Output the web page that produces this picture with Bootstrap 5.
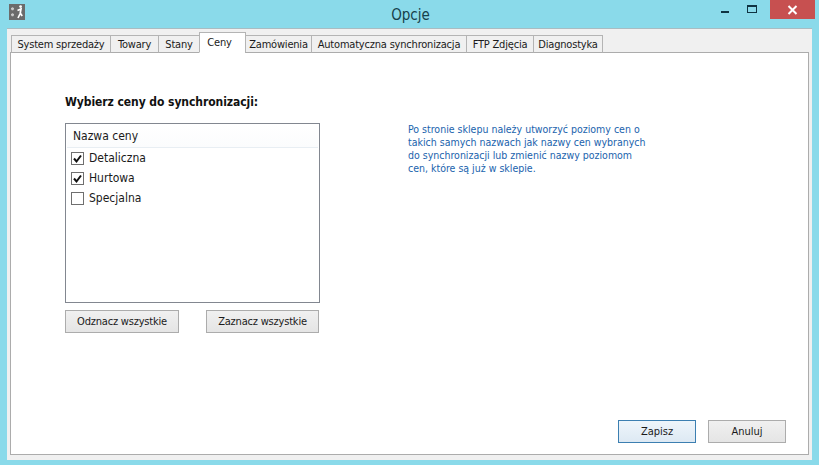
<!DOCTYPE html>
<html lang="pl"><head><meta charset="utf-8"><title>Opcje</title>
<link rel="stylesheet" href="https://cdn.jsdelivr.net/npm/bootstrap@5.3.0/dist/css/bootstrap.min.css">
<style>
html,body{height:100%}
body{width:819px;height:465px;overflow:hidden;background:#8adaea;font-family:"DejaVu Sans Condensed","DejaVu Sans","Liberation Sans",sans-serif;font-size:11px;color:#1a1a1a}
.win-title{height:28px;padding-left:9px}
.win-ico{width:16px;height:16px;margin-top:-4px}
.win-name{font-family:"DejaVu Sans Condensed","DejaVu Sans",sans-serif;font-size:15px;color:#17414b;left:0;right:0;top:5px;text-align:center;padding-left:2px;line-height:20px}
.win-btns{right:4px;top:0}
.win-b{width:26px;height:19px}
.win-x{width:45px;height:19px;background:#c75050}
.win-body{margin:0 7px 5px 7px;height:432px;background:#f0f0f0;border-top:1px solid #a9bcc2;padding:6px 3px 4px 3px}
.opt-tabs{height:18px;border:0;padding-left:2px;flex-wrap:nowrap;position:relative;z-index:1}
.opt-tabs .nav-link{height:18px;margin:0 0 0 -1px;padding:0;text-align:center;line-height:17px;font-size:11px;letter-spacing:-.2px;color:#1a1a1a;background:#f0f0f0;border:1px solid #b4b4b4;border-bottom:1px solid #acacac;border-radius:0;white-space:nowrap}
.opt-tabs .nav-link.active{height:21px;margin-top:-3px;padding-right:6px;line-height:20px;background:#fff;border-color:#b4b4b4 #b4b4b4 #fff;color:#1a1a1a}
.t1{width:100px}.t2{width:49px}.t3{width:42px}.t4{width:47px}.t5{width:67px}.t6{width:156px}.t7{width:68px}.t8{width:70px}
.opt-pane{background:#fff;border:1px solid #acacac;height:403px;margin-top:-1px;padding:41px 22px 11px 54px}
.pane-h{font-size:12px;font-weight:700;line-height:16px;margin:0 0 13px;color:#111;letter-spacing:-.07px}
.left-col{width:255px}
.lst{height:180px;border:1px solid #828790;padding:1px}
.lst-h{height:23px;line-height:22px;padding-left:6px;font-size:12px;background:linear-gradient(#fff,#fbfcfd);border-bottom:1px solid #e8eef3}
.lst-r{height:20px;font-size:12px;padding-left:4px;gap:5px}
.cb{width:13px;height:13px;border:1px solid #6f6f6f;background:#fff;flex:none}
.cb svg{display:block}
.win-btn{height:23px;padding:0;font-size:11px;line-height:20px;color:#1a1a1a;border:1px solid #acacac;border-radius:0;background:linear-gradient(#f0f0f0,#e5e5e5)}
.b-sel{width:114px;letter-spacing:-.2px}
.b-sel2{width:113px;letter-spacing:-.2px}
.b-act{width:78px}
.b-def{border-color:#3c7fb1;background:linear-gradient(#eef5fb,#dde9f3)}
.lst-btns{margin-top:7px;padding-right:1px}
.note-t{margin:0 0 0 88px;width:244px;color:#1a63ad;font-size:10.5px;line-height:13px;padding-top:29px}
.foot{gap:12px}
</style></head><body>
<div class="win-title d-flex align-items-center position-relative">
<svg class="win-ico" viewBox="0 0 16 16"><rect width="16" height="16" fill="#6b6b6b"/><g fill="#c9c9c9"><rect x="2" y="4" width="3" height="1.6"/><rect x="2.7" y="3.3" width="1.6" height="3"/><rect x="2" y="10" width="3" height="1.6"/><rect x="2.7" y="9.3" width="1.6" height="3"/></g><circle cx="11.6" cy="2.6" r="1.4" fill="#fff"/><path d="M8.5 6.5 12 5l-.8 4.5L9 14M11.2 9l2 3" stroke="#fff" stroke-width="1.7" fill="none"/></svg>
<div class="win-name position-absolute">Opcje</div>
<div class="win-btns position-absolute d-flex">
<div class="win-b d-flex align-items-center justify-content-center"><svg width="26" height="19"><rect x="3" y="11" width="8" height="2" fill="#0f3342"/></svg></div>
<div class="win-b d-flex"><svg width="26" height="19"><rect x="3.5" y="5.5" width="9" height="7" fill="none" stroke="#0f3342"/><rect x="3" y="5" width="10" height="2" fill="#0f3342"/></svg></div>
<div class="win-x d-flex align-items-center justify-content-center"><svg width="11" height="10"><path d="M1.5 1 9.5 9M9.5 1l-8 8" stroke="#fff" stroke-width="2"/></svg></div>
</div></div>
<div class="win-body">
<ul class="nav nav-tabs opt-tabs">
<li class="nav-item"><a class="nav-link t1" href="#">System sprzedaży</a></li>
<li class="nav-item"><a class="nav-link t2" href="#">Towary</a></li>
<li class="nav-item"><a class="nav-link t3" href="#">Stany</a></li>
<li class="nav-item"><a class="nav-link active t4" href="#">Ceny</a></li>
<li class="nav-item"><a class="nav-link t5" href="#">Zamówienia</a></li>
<li class="nav-item"><a class="nav-link t6" href="#">Automatyczna synchronizacja</a></li>
<li class="nav-item"><a class="nav-link t7" href="#">FTP Zdjęcia</a></li>
<li class="nav-item"><a class="nav-link t8" href="#">Diagnostyka</a></li>
</ul>
<div class="opt-pane d-flex flex-column">
<div class="d-flex">
<div class="left-col">
<h6 class="pane-h">Wybierz ceny do synchronizacji:</h6>
<div class="lst">
<div class="lst-h">Nazwa ceny</div>
<div class="lst-r d-flex align-items-center"><span class="cb"><svg width="11" height="11"><path d="M2 5.5 4.5 8.5 9 2.5" stroke="#111" stroke-width="2" fill="none"/></svg></span>Detaliczna</div>
<div class="lst-r d-flex align-items-center"><span class="cb"><svg width="11" height="11"><path d="M2 5.5 4.5 8.5 9 2.5" stroke="#111" stroke-width="2" fill="none"/></svg></span>Hurtowa</div>
<div class="lst-r d-flex align-items-center"><span class="cb"></span>Specjalna</div>
</div>
<div class="d-flex justify-content-between lst-btns">
<button class="btn win-btn b-sel">Odznacz wszystkie</button>
<button class="btn win-btn b-sel2">Zaznacz wszystkie</button>
</div>
</div>
<p class="note-t">Po stronie sklepu należy utworzyć poziomy cen o takich samych nazwach jak nazwy cen wybranych do synchronizacji lub zmienić nazwy poziomom cen, które są już w sklepie.</p>
</div>
<div class="d-flex justify-content-end foot mt-auto">
<button class="btn win-btn b-act b-def">Zapisz</button>
<button class="btn win-btn b-act">Anuluj</button>
</div>
</div>
</div>
<script src="https://cdn.jsdelivr.net/npm/bootstrap@5.3.0/dist/js/bootstrap.bundle.min.js"></script>
</body></html>
